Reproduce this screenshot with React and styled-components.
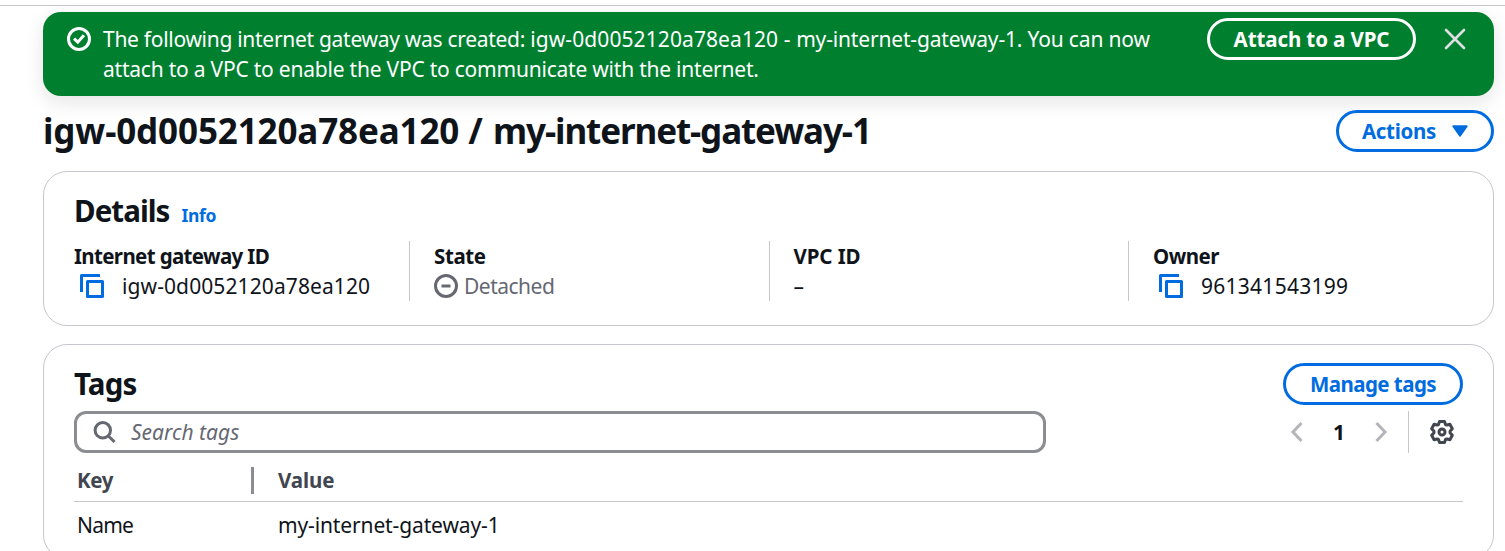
import React from 'react';
import styled, { createGlobalStyle } from 'styled-components';

const GlobalStyle = createGlobalStyle`
  * { box-sizing: border-box; }
  body {
    margin: 0;
    background: #fff;
    color: #0f141a;
    font: 21px/30px "Noto Sans", "Open Sans", sans-serif;
    overflow: hidden;
  }
  h1, h2 { margin: 0; font-weight: 700; }
  button { font: inherit; cursor: pointer; }
`;

const Page = styled.main`
  height: 551px;
  overflow: hidden;
  padding: 5px 11px 0 43px;
`;

const TopRule = styled.div`
  height: 1px;
  margin: 0 -11px 6px -43px;
  background: #c6c6cd;
`;

const Text = styled.span`
  white-space: nowrap;
  letter-spacing: ${(p) => p.$track || 0}px;
`;

const Banner = styled.section`
  display: flex;
  align-items: flex-start;
  height: 84px;
  padding: 12px 24px 0;
  border-radius: 18px;
  background: #00802f;
  color: #fff;
  box-shadow: 0 6px 18px 1px rgba(15, 20, 26, 0.1);
`;

const BannerMessage = styled.div`
  flex: 1;
  margin-left: 12px;
`;

const MessageLine = styled.div`
  white-space: nowrap;
`;

const Svg = styled.svg`
  display: block;
  flex: none;
  fill: none;
  stroke: currentColor;
  stroke-width: ${(p) => p.$weight || 3};
`;

const BannerIcon = styled(Svg)`
  margin-top: 3px;
`;

const PillButton = styled.button`
  display: flex;
  align-items: center;
  justify-content: center;
  gap: 16px;
  flex: none;
  width: ${(p) => p.$width}px;
  height: 42px;
  padding: 0 0 1px;
  border: 3px solid currentColor;
  border-radius: 21px;
  background: transparent;
  color: ${(p) => p.$color || '#006ce0'};
  font-size: 20.5px;
  font-weight: 700;
  white-space: nowrap;
`;

const BannerAction = styled(PillButton)`
  margin-top: -6px;
`;

const IconButton = styled.button`
  display: flex;
  padding: 0;
  border: 0;
  background: none;
  color: ${(p) => p.$color};
`;

const Dismiss = styled(IconButton)`
  margin: 3px 3px 0 27px;
`;

const TitleBar = styled.header`
  display: flex;
  align-items: center;
  justify-content: space-between;
  height: 42px;
  margin: 14px 0 19px;
`;

const Title = styled.h1`
  font-size: 35px;
  line-height: 42px;
`;

const Card = styled.section`
  height: ${(p) => p.$height}px;
  margin-bottom: 18px;
  padding: ${(p) => p.$padding};
  border: 1px solid #c6c6cd;
  border-radius: 24px;
`;

const CardHeader = styled.div`
  display: flex;
  align-items: baseline;
  gap: 12px;
  height: 39px;
`;

const CardTitle = styled.h2`
  font-size: 29.5px;
  line-height: 36px;
`;

const InfoLink = styled.a`
  color: #006ce0;
  font-size: 17.5px;
  line-height: 28px;
  font-weight: 700;
`;

const Fields = styled.div`
  display: grid;
  grid-template-columns: 335px 359.5px 359.5px 1fr;
  margin-top: 9px;
`;

const Field = styled.div`
  height: 60px;
  padding-left: ${(p) => (p.$first ? 0 : 24)}px;
  border-left: ${(p) => (p.$first ? '0' : '1px solid #c6c6cd')};
`;

const Label = styled.div`
  font-size: 20.5px;
  font-weight: 700;
`;

const Value = styled.div`
  display: flex;
  align-items: center;
  gap: ${(p) => p.$gap || 0}px;
  padding-left: ${(p) => p.$indent || 0}px;
  color: ${(p) => p.$color || 'inherit'};
`;

const TagsHeader = styled.div`
  display: flex;
  align-items: center;
  justify-content: space-between;
  height: 42px;
`;

const Tools = styled.div`
  display: flex;
  justify-content: space-between;
  height: 42px;
  margin-top: 6px;
`;

const SearchBox = styled.label`
  display: flex;
  align-items: center;
  gap: 14px;
  width: 972px;
  padding: 0 0 1px 16px;
  border: 3px solid #8c8c94;
  border-radius: 12px;
  color: #656871;
  font-style: italic;
`;

const Pager = styled.nav`
  display: flex;
  align-items: center;
  padding-right: 9px;
`;

const PageNumber = styled.span`
  width: 62px;
  text-align: center;
  font-weight: 700;
`;

const Divider = styled.span`
  width: 1px;
  height: 42px;
  margin: 0 21px 0 14px;
  background: #c6c6cd;
`;

const Table = styled.div`
  display: grid;
  grid-template-columns: 177px 1fr;
`;

const HeadCell = styled.div`
  display: flex;
  align-items: center;
  height: 49px;
  padding: 5px 0 0 ${(p) => p.$indent}px;
  border-bottom: 1px solid #c6c6cd;
  color: #424650;
  font-size: 20.5px;
  font-weight: 700;
`;

const ColumnGrip = styled.span`
  width: 3px;
  height: 27px;
  margin: 1px -3px 0 auto;
  background: #8c8c94;
`;

const Cell = styled.div`
  height: 48px;
  padding: 8px 0 0 ${(p) => p.$indent}px;
`;

function CopyIcon() {
  return (
    <Svg width="24" height="24" viewBox="0 0 24 24" color="#006ce0" strokeLinejoin="round">
      <path d="M1.5 18V1.5H20" />
      <rect x="7.5" y="7.5" width="15" height="15" />
    </Svg>
  );
}

export default function App() {
  return (
    <>
      <GlobalStyle />
      <Page>
        <TopRule />
        <Banner>
          <BannerIcon $weight={2} width="24" height="24" viewBox="0 0 16 16">
            <circle cx="8" cy="8" r="7" />
            <path d="m4.7 7.7 2.5 2.4 4.1-4.6" />
          </BannerIcon>
          <BannerMessage>
            <MessageLine>
              <Text $track={-0.29}>The following internet gateway was created: </Text>
              <Text $track={0.09}>igw-0d0052120a78ea120 - </Text>
              <Text $track={-0.17}>my-internet-gateway-1. You can now</Text>
            </MessageLine>
            <MessageLine>
              <Text $track={-0.22}>attach to a VPC to enable the VPC to communicate with the internet.</Text>
            </MessageLine>
          </BannerMessage>
          <BannerAction $width={209} $color="#fff"><Text $track={-0.1}>Attach to a VPC</Text></BannerAction>
          <Dismiss $color="#dedee3" aria-label="Dismiss">
            <Svg $weight={2.6} width="24" height="24" viewBox="0 0 24 24">
              <path d="m3 3 18 18M21 3 3 21" strokeLinecap="round" />
            </Svg>
          </Dismiss>
        </Banner>

        <TitleBar>
          <Title>
            <Text $track={-0.13}>igw-0d0052120a78ea120 </Text>
            <Text $track={0.6}>/ </Text>
            <Text $track={-1.1}>my-internet-gateway-1</Text>
          </Title>
          <PillButton $width={158}>
            <Text $track={-0.3}>Actions</Text>
            <Svg $weight={2} width="16" height="14" viewBox="1 0 16 14">
              <path d="M2.3 2.2h13.4L9 11.6Z" fill="currentColor" strokeLinejoin="round" />
            </Svg>
          </PillButton>
        </TitleBar>

        <Card $height={155} $padding="21px 30px 0">
          <CardHeader>
            <CardTitle><Text $track={-0.95}>Details</Text></CardTitle>
            <InfoLink><Text $track={-0.3}>Info</Text></InfoLink>
          </CardHeader>
          <Fields>
            <Field $first>
              <Label><Text $track={-0.64}>Internet gateway ID</Text></Label>
              <Value $indent={6} $gap={18}><CopyIcon /><Text $track={0.1}>igw-0d0052120a78ea120</Text></Value>
            </Field>
            <Field>
              <Label><Text $track={-0.4}>State</Text></Label>
              <Value $gap={6} $color="#656871">
                <Svg $weight={2} width="24" height="24" viewBox="0 0 16 16">
                  <circle cx="8" cy="8" r="7" />
                  <path d="M5 8h6" />
                </Svg>
                <Text $track={-0.5}>Detached</Text>
              </Value>
            </Field>
            <Field>
              <Label><Text $track={-0.1}>VPC ID</Text></Label>
              <Value>–</Value>
            </Field>
            <Field>
              <Label><Text $track={-0.5}>Owner</Text></Label>
              <Value $indent={6} $gap={18}><CopyIcon /><Text $track={0.26}>961341543199</Text></Value>
            </Field>
          </Fields>
        </Card>

        <Card $height={215} $padding="18px 30px 0">
          <TagsHeader>
            <CardTitle><Text $track={-0.8}>Tags</Text></CardTitle>
            <PillButton $width={180}><Text $track={-0.55}>Manage tags</Text></PillButton>
          </TagsHeader>
          <Tools>
            <SearchBox>
              <Svg width="24" height="24" viewBox="0 0 24 24">
                <circle cx="9.8" cy="10.3" r="7.7" />
                <path d="m15.2 15.7 6.3 6.3" />
              </Svg>
              <Text>Search tags</Text>
            </SearchBox>
            <Pager>
              <IconButton $color="#b4b4bb" aria-label="Previous page">
                <Svg width="24" height="24" viewBox="0 0 24 24"><path d="m17.5 3-8.5 9 8.5 9" /></Svg>
              </IconButton>
              <PageNumber>1</PageNumber>
              <IconButton $color="#b4b4bb" aria-label="Next page">
                <Svg width="24" height="24" viewBox="0 0 24 24"><path d="m6.500 3 8.500 9-8.500 9" /></Svg>
              </IconButton>
              <Divider />
              <IconButton $color="#424650" aria-label="Preferences">
                <Svg width="24" height="24" viewBox="-12 -12 24 24" strokeLinejoin="round">
                  <circle r="3" />
                  <path d="M-2.500-10.400H2.500L3.500-7.500Q4-6.900 4.900-7L7.900-7.700 10.300-3.300 8.200-1Q7.800 0 8.200 1L10.300 3.300 7.900 7.700 4.900 7Q4 6.900 3.500 7.500L2.500 10.400H-2.500L-3.500 7.500Q-4 6.900-4.900 7L-7.900 7.700-10.300 3.300-8.200 1Q-7.800 0-8.200-1L-10.300-3.300-7.900-7.700-4.900-7Q-4-6.900-3.500-7.500Z" />
                </Svg>
              </IconButton>
            </Pager>
          </Tools>
          <Table>
            <HeadCell $indent={3}><Text $track={-0.4}>Key</Text><ColumnGrip /></HeadCell>
            <HeadCell $indent={27}><Text $track={-0.1}>Value</Text></HeadCell>
            <Cell $indent={3}><Text $track={-0.8}>Name</Text></Cell>
            <Cell $indent={27}><Text $track={-0.13}>my-internet-gateway-1</Text></Cell>
          </Table>
        </Card>
      </Page>
    </>
  );
}
